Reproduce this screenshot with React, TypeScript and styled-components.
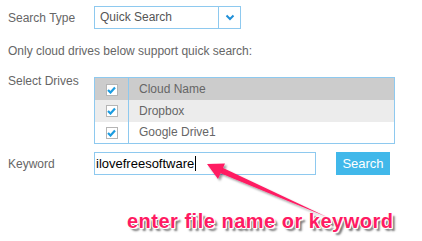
import React from "react";
import styled, { createGlobalStyle } from "styled-components";

const GlobalStyle = createGlobalStyle`
  html, body {
    margin: 0;
    padding: 0;
    background: #ffffff;
  }
`;

const BLUE_BORDER = "#8ec9ef";
const LABEL_GRAY = "#666666";
const PINK = "#ff1a62";

const Page = styled.div`
  position: relative;
  width: 422px;
  height: 241px;
  overflow: hidden;
  box-sizing: border-box;
  padding: 6px 0 0 8px;
  font-family: "Liberation Sans", Arial, sans-serif;
  font-size: 12px;
  line-height: 14px;
  color: ${LABEL_GRAY};
`;

const FieldRow = styled.div<{ $top?: number; $align?: string }>`
  display: grid;
  grid-template-columns: 86px auto;
  align-items: ${(p) => p.$align || "center"};
  margin-top: ${(p) => p.$top || 0}px;
`;

const Label = styled.span`
  white-space: nowrap;
`;

const Note = styled.div`
  margin-top: 15px;
`;

const SelectBox = styled.div`
  display: flex;
  width: 147px;
  height: 23px;
  box-sizing: border-box;
  border: 1px solid ${BLUE_BORDER};
  background: #fff;
`;

const SelectValue = styled.span`
  flex: 1;
  padding-left: 5px;
  line-height: 21px;
  font-size: 12px;
  color: #555;
`;

const SelectButton = styled.span`
  width: 21px;
  border-left: 1px solid ${BLUE_BORDER};
  display: flex;
  align-items: center;
  justify-content: center;
`;

const DrivesTable = styled.table`
  margin-top: 3px;
  width: 301px;
  border-collapse: collapse;
  border: 1px solid ${BLUE_BORDER};
  font-size: 12px;
  color: ${LABEL_GRAY};
`;

const Row = styled.tr<{ $bg: string }>`
  background: ${(p) => p.$bg};
  height: 22px;
`;

const CheckCell = styled.td`
  width: 33px;
  padding: 0;
  border-right: 1px solid ${BLUE_BORDER};
  text-align: center;
  vertical-align: middle;
`;

const NameCell = styled.td`
  padding: 0 0 0 10px;
  vertical-align: middle;
`;

const CheckBox = styled.span`
  display: inline-flex;
  align-items: center;
  justify-content: center;
  width: 12px;
  height: 12px;
  box-sizing: border-box;
  border: 1px solid #b5b5b5;
  background: #fff;
  vertical-align: middle;
`;

const KeywordInput = styled.div`
  display: flex;
  align-items: center;
  width: 222px;
  height: 23px;
  box-sizing: border-box;
  border: 1px solid ${BLUE_BORDER};
  padding-left: 1px;
  font-size: 13px;
  color: #000;
`;

const Caret = styled.span`
  display: inline-block;
  width: 1px;
  height: 15px;
  margin-left: 1px;
  background: #000;
`;

const InputGroup = styled.div`
  display: flex;
  align-items: center;
  gap: 20px;
`;

const SearchButton = styled.button`
  width: 54px;
  height: 23px;
  border: none;
  padding: 0;
  background: #41b8ea;
  color: #fff;
  font-family: "Liberation Sans", Arial, sans-serif;
  font-size: 13px;
`;

const Caption = styled.div`
  margin: 34px 0 0 119px;
  font-family: "Liberation Sans", Arial, sans-serif;
  font-weight: bold;
  font-size: 20px;
  line-height: 24px;
  letter-spacing: 0.5px;
  white-space: nowrap;
  color: ${PINK};
  text-shadow: -1px 0 #fff, 1px 0 #fff, 0 -1px #fff, 0 1px #fff,
    1px 1px #fff, 3px 3px 2px rgba(0, 0, 0, 0.55);
`;

const ArrowLayer = styled.svg`
  position: absolute;
  left: 0;
  top: 0;
  pointer-events: none;
`;

function Check() {
  return (
    <svg width="9" height="8" viewBox="0 0 9 8">
      <path d="M1 4 L3.5 6.5 L8 1.5" fill="none" stroke="#1c9ce0" strokeWidth="2.2" />
    </svg>
  );
}

const drives = [
  { name: "Cloud Name", bg: "#cccccc" },
  { name: "Dropbox", bg: "#ececec" },
  { name: "Google Drive1", bg: "#ffffff" },
];

export default function App() {
  return (
    <Page>
      <GlobalStyle />
      <FieldRow>
        <Label>Search Type</Label>
        <SelectBox>
          <SelectValue>Quick Search</SelectValue>
          <SelectButton>
            <svg width="10" height="7" viewBox="0 0 10 7">
              <path d="M1.5 1.5 L5 5 L8.5 1.5" fill="none" stroke="#1f8fd8" strokeWidth="2" />
            </svg>
          </SelectButton>
        </SelectBox>
      </FieldRow>
      <Note>Only cloud drives below support quick search:</Note>
      <FieldRow $top={16} $align="start">
        <Label>Select Drives</Label>
        <DrivesTable>
          <tbody>
            {drives.map((d) => (
              <Row key={d.name} $bg={d.bg}>
                <CheckCell>
                  <CheckBox>
                    <Check />
                  </CheckBox>
                </CheckCell>
                <NameCell>{d.name}</NameCell>
              </Row>
            ))}
          </tbody>
        </DrivesTable>
      </FieldRow>
      <FieldRow $top={8}>
        <Label>Keyword</Label>
        <InputGroup>
          <KeywordInput>
            ilovefreesoftware
            <Caret />
          </KeywordInput>
          <SearchButton>Search</SearchButton>
        </InputGroup>
      </FieldRow>
      <Caption>enter file name or keyword</Caption>
      <ArrowLayer width="422" height="241" viewBox="0 0 422 241">
        <defs>
          <filter id="arrowShadow" x="-10%" y="-10%" width="130%" height="140%">
            <feDropShadow dx="2" dy="2" stdDeviation="1.2" floodColor="#000" floodOpacity="0.4" />
          </filter>
        </defs>
        <g filter="url(#arrowShadow)" fill={PINK}>
          <polygon points="327,217 222,167.5 220,173" />
          <polygon points="207,164 225,163.5 218,179" />
        </g>
      </ArrowLayer>
    </Page>
  );
}
